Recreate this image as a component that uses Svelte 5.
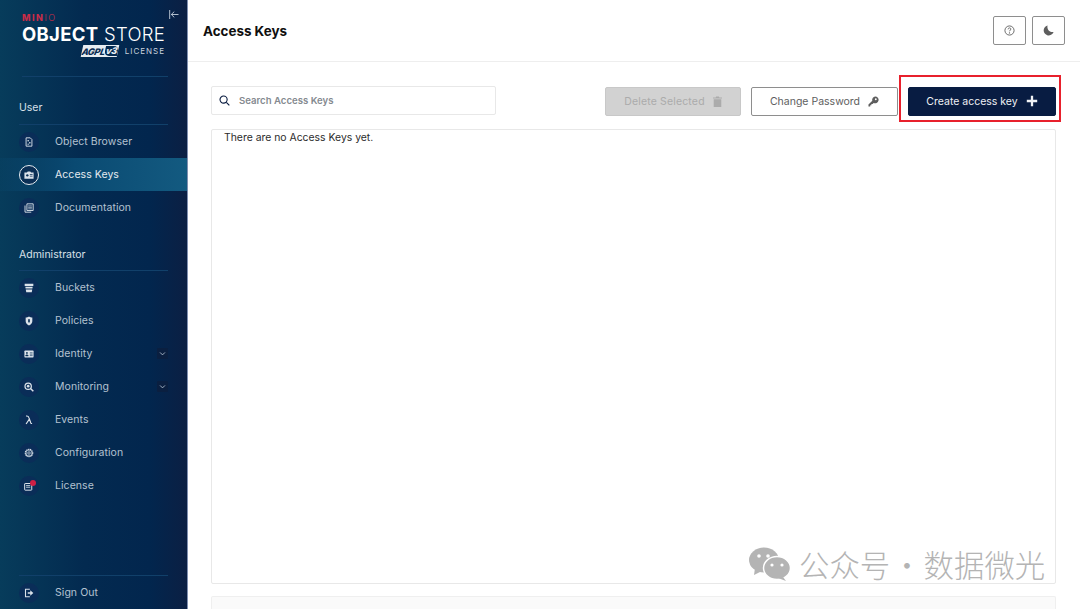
<script>
  const userItems = [
    { label: 'Object Browser', icon: 'browser' },
    { label: 'Access Keys', icon: 'keys', active: true },
    { label: 'Documentation', icon: 'docs' }
  ];
  const adminItems = [
    { label: 'Buckets', icon: 'buckets' },
    { label: 'Policies', icon: 'policies' },
    { label: 'Identity', icon: 'identity', expand: true },
    { label: 'Monitoring', icon: 'monitoring', expand: true },
    { label: 'Events', icon: 'events' },
    { label: 'Configuration', icon: 'config' },
    { label: 'License', icon: 'license', dot: true }
  ];
</script>

{#snippet icon(name)}
  <svg viewBox="0 0 12 12" aria-hidden="true">
    {#if name === 'browser'}
      <path d="M2.500 1h5L9.500 3v8h-7z" fill="none" stroke="currentColor" stroke-width="1.100" />
      <circle cx="5" cy="4.500" r="1" fill="currentColor" />
      <circle cx="7" cy="7" r="1" fill="currentColor" />
      <circle cx="5" cy="8.600" r=".8" fill="currentColor" />
    {:else if name === 'keys'}
      <path d="M.5 3h3l1-1.200h3l1 1.200h3v7.500H.5z" fill="currentColor" />
      <circle cx="4" cy="6.400" r="1.400" fill="#0b2f55" />
      <path d="M7 5.400h3.300M7 7.400h3.300" stroke="#0b2f55" stroke-width=".9" />
    {:else if name === 'docs'}
      <path d="M3.500 1H11v8H3.500z" fill="none" stroke="currentColor" stroke-width="1.100" />
      <path d="M1.200 3v8h7.500" fill="none" stroke="currentColor" stroke-width="1.100" />
      <path d="M5 3.500h4.500M5 5.200h4.500M5 7h4.500" stroke="currentColor" stroke-width=".8" />
    {:else if name === 'buckets'}
      <path d="M.8 1h10.400v2.500H.8zM1.600 4.600h8.800l-.3 2.100H1.900zM2.100 7.800h7.800L9.300 11.200H2.700z" fill="currentColor" />
    {:else if name === 'policies'}
      <path d="M6 .6c1.400 1 2.700 1.300 4 1.300v4.500c0 2.300-1.800 3.900-4 5-2.200-1.100-4-2.700-4-5V1.900C3.300 1.900 4.600 1.600 6 .6z" fill="currentColor" />
      <rect x="5" y="3.500" width="2" height="4.500" rx="1" fill="#0b2f55" />
    {:else if name === 'identity'}
      <rect x=".5" y="1.800" width="11" height="8.400" rx=".8" fill="currentColor" />
      <circle cx="3.500" cy="4.700" r="1.100" fill="#0b2f55" />
      <path d="M1.900 8.300c.2-1.700 3-1.700 3.200 0zM7 4.500h3.300M7 6.200h3.300M7 7.900h3.300" fill="#0b2f55" stroke="#0b2f55" stroke-width=".7" />
    {:else if name === 'monitoring'}
      <circle cx="5" cy="5" r="3.800" fill="none" stroke="currentColor" stroke-width="1.500" />
      <path d="M7.800 7.800l3.400 3.400" stroke="currentColor" stroke-width="1.800" />
      <circle cx="5" cy="5" r="1.600" fill="currentColor" />
    {:else if name === 'events'}
      <path d="M2.500 1.300c2.300-.4 3 .6 3.500 2.200l2.200 6c.2.500.6.800 1.500.7M6.400 5L2.500 10.800" fill="none" stroke="currentColor" stroke-width="1.400" />
    {:else if name === 'config'}
      <circle cx="6" cy="6" r="4.500" fill="none" stroke="currentColor" stroke-width="1.300" stroke-dasharray="1.800 .6" />
      <circle cx="6" cy="6" r="3.500" fill="none" stroke="currentColor" stroke-width=".8" />
      <circle cx="6" cy="6" r="1.500" fill="#0a2d58" stroke="currentColor" stroke-width=".9" />
    {:else if name === 'license'}
      <rect x=".8" y="3" width="8.500" height="8" rx=".6" fill="none" stroke="currentColor" stroke-width="1.200" />
      <path d="M2.500 5.500h5M2.500 7.500h5" stroke="currentColor" stroke-width="1" />
    {:else if name === 'signout'}
      <path d="M7 1.500H1.800v9H7" fill="none" stroke="currentColor" stroke-width="1.300" />
      <path d="M4.500 5h3V2.800L11.200 6 7.500 9.200V7h-3z" fill="currentColor" />
    {/if}
  </svg>
{/snippet}

{#snippet navRow(item)}
  <div class="nav-row" class:active={item.active}>
    <span class="nav-icon">
      {@render icon(item.icon)}
      {#if item.dot}<span class="dot"></span>{/if}
    </span>
    <span class="nav-label">{item.label}</span>
    {#if item.expand}
      <span class="expand">
        <svg viewBox="0 0 8 8" width="7" height="7"><path d="M1.200 2.800L4 5.600l2.800-2.800" fill="none" stroke="currentColor" stroke-width="1" /></svg>
      </span>
    {/if}
  </div>
{/snippet}

<div class="page">
  <aside class="sidebar">
    <div class="brand">
      <button class="collapse" aria-label="Collapse menu">
        <svg viewBox="0 0 11 10" width="10" height="9"><path d="M.7 0v10M10.500 5H2.500M5.800 1.800L2.500 5l3.300 3.200" fill="none" stroke="currentColor" stroke-width="1" /></svg>
      </button>
      <div class="logo-min"><b>MIN</b>IO</div>
      <div class="logo-main"><b>OBJECT</b> STORE</div>
      <div class="logo-sub">
        <span class="agpl"><span>AGPL</span><i>v3</i></span>
        <span class="logo-license">LICENSE</span>
      </div>
    </div>

    <div class="group-title first">User</div>
    <nav class="nav-list">
      {#each userItems as item}
        {@render navRow(item)}
      {/each}
    </nav>

    <div class="group-title second">Administrator</div>
    <nav class="nav-list">
      {#each adminItems as item}
        {@render navRow(item)}
      {/each}
    </nav>

    <div class="signout">
      {@render navRow({ label: 'Sign Out', icon: 'signout' })}
    </div>
  </aside>

  <main class="main">
    <header class="topbar">
      <h1>Access Keys</h1>
      <div class="top-actions">
        <button class="square" aria-label="Help">
          <svg viewBox="0 0 12 12" width="11" height="11">
            <circle cx="6" cy="6" r="5" fill="none" stroke="currentColor" stroke-width="1" />
            <path d="M4.500 4.700c0-2 3-2 3-.2 0 1.100-1.500 1.100-1.500 2.400" fill="none" stroke="currentColor" stroke-width="1" />
            <circle cx="6" cy="8.700" r=".7" fill="currentColor" />
          </svg>
        </button>
        <button class="square" aria-label="Dark mode">
          <svg viewBox="0 0 12 12" width="11" height="11">
            <path d="M5 .5a5.500 5.500 0 1 0 6.500 7C8 8.500 3.800 5 5 .5z" fill="currentColor" />
          </svg>
        </button>
      </div>
    </header>

    <div class="content">
      <div class="toolbar">
        <label class="search">
          <svg viewBox="0 0 12 12" width="11" height="11">
            <circle cx="5" cy="5" r="3.900" fill="none" stroke="#07193e" stroke-width="1.200" />
            <path d="M8 8l3.300 3.300" stroke="#07193e" stroke-width="1.300" />
          </svg>
          <span>Search Access Keys</span>
        </label>
        <div class="actions">
          <button class="btn disabled">
            Delete Selected
            <svg viewBox="0 0 10 12" width="9" height="11"><path d="M0 1.500h3l.5-1h3l.5 1h3v1.200H0zM.8 3.500h8.400V12H.8z" fill="currentColor" /></svg>
          </button>
          <button class="btn outline">
            Change Password
            <svg viewBox="0 0 12 12" width="11" height="11"><path d="M7.800.5a3.700 3.700 0 1 1-1.600 7L5 8.700H3.700V10H2.400v1.500H.5V9.300l4.200-4.100A3.700 3.700 0 0 1 7.800.5z" fill="currentColor" /><circle cx="8.500" cy="3.500" r="1" fill="#fff" /></svg>
          </button>
          <span class="highlight">
            <button class="btn primary">
              Create access key
              <svg viewBox="0 0 12 12" width="12" height="12"><path d="M6 .8v10.400M.8 6h10.400" stroke="currentColor" stroke-width="2.300" /></svg>
            </button>
          </span>
        </div>
      </div>

      <section class="panel">There are no Access Keys yet.</section>
      <div class="panel-next"></div>
    </div>

    <div class="watermark">
      <svg viewBox="0 0 42 34" width="42" height="34">
        <ellipse cx="15" cy="13" rx="15" ry="12.500" fill="#b4b4b4" />
        <path d="M6 21l-1 7 8-4z" fill="#b4b4b4" />
        <ellipse cx="28" cy="21" rx="13.500" ry="11.500" fill="#b4b4b4" stroke="#fff" stroke-width="1.500" />
        <path d="M34 30l3 4-8-3z" fill="#b4b4b4" />
        <circle cx="10" cy="9" r="1.800" fill="#fff" /><circle cx="19" cy="9" r="1.800" fill="#fff" />
        <circle cx="23" cy="18" r="1.600" fill="#fff" /><circle cx="33" cy="18" r="1.600" fill="#fff" />
      </svg>
      <span>公众号<span class="wm-dot">·</span>数据微光</span>
    </div>
  </main>
</div>

<style>
  :global(body) {
    margin: 0;
    background: #fff;
    font-family: Inter, "Liberation Sans", sans-serif;
  }

  .page {
    display: flex;
    width: 1080px;
    height: 609px;
    overflow: hidden;
  }

  /* sidebar */
  .sidebar {
    width: 187px;
    flex-shrink: 0;
    display: flex;
    flex-direction: column;
    color: #fff;
    background: linear-gradient(90deg, #073c5b 0%, #032a50 45%, #02264e 80%, #0b1f43 100%);
    border-right: 1px solid #7f8fb0;
  }

  .brand {
    position: relative;
    height: 77px;
    box-sizing: border-box;
    margin: 0 19px 0 22px;
    padding-top: 13px;
    border-bottom: 1px solid #11406a;
  }
  .collapse {
    position: absolute;
    top: 10px;
    right: -11px;
    padding: 0;
    background: none;
    border: 0;
    color: #c5d0dc;
    display: flex;
  }
  .logo-min {
    font-size: 9px;
    line-height: 10px;
    letter-spacing: 1.500px;
    color: #c72c48;
    font-weight: 300;
  }
  .logo-min b { font-weight: 800; }
  .logo-main {
    font-size: 18.500px;
    line-height: 22px;
    font-weight: 300;
    white-space: nowrap;
    letter-spacing: 0.3px;
  }
  .logo-main b { font-weight: 700; }
  .logo-sub {
    display: flex;
    align-items: center;
    justify-content: flex-end;
    gap: 7px;
    padding-right: 3px;
  }
  .agpl {
    display: flex;
    width: 36px;
    height: 12px;
    box-sizing: border-box;
    align-items: center;
    font-size: 9px;
    font-weight: 800;
    font-style: italic;
    color: #062a50;
    background: #e8edf2;
    transform: skewX(-12deg);
    letter-spacing: -0.3px;
    overflow: hidden;
  }
  .agpl span { flex: 1; text-align: center; }
  .agpl i {
    color: #e8edf2;
    background: #062a50;
    border-radius: 0 5px 0 5px;
    padding: 0 1px;
    line-height: 10px;
    margin-right: 1px;
  }
  .logo-license {
    font-size: 8px;
    letter-spacing: 1px;
    color: #c9d3de;
  }

  .group-title {
    font-size: 10.500px;
    line-height: 14px;
    color: #d9e0e8;
    margin: 0 19px;
    border-bottom: 1px solid #11406a;
  }
  .group-title.first { margin-top: 24px; padding-bottom: 9px; }
  .group-title.second { margin-top: 24px; padding-bottom: 8px; }

  .nav-row {
    display: flex;
    align-items: center;
    height: 33px;
    padding: 0 19px;
    color: #b4c2d1;
    font-size: 10.500px;
    letter-spacing: 0.05px;
  }
  .nav-row.active {
    color: #e6ebf0;
    background: linear-gradient(90deg, rgba(8, 70, 106, 0.3) 0%, #0a4a72 40%, #135a80 100%);
  }
  .nav-icon {
    position: relative;
    width: 20px;
    height: 20px;
    box-sizing: border-box;
    border-radius: 50%;
    background: #0a2d58;
    color: #dbe2ea;
    display: flex;
    align-items: center;
    justify-content: center;
    margin-right: 16px;
    flex-shrink: 0;
  }
  .nav-row.active .nav-icon {
    background: #0b2f55;
    border: 1px solid #e6ebf0;
  }
  .nav-icon svg { width: 10px; height: 10px; }
  .dot {
    position: absolute;
    top: 4px;
    left: 11px;
    width: 6px;
    height: 6px;
    border-radius: 50%;
    background: #cf1f45;
  }
  .nav-label { flex: 1; white-space: nowrap; }
  .expand {
    width: 11px;
    height: 11px;
    display: flex;
    align-items: center;
    justify-content: center;
    background: #0a1f40;
    color: #b4c2d1;
    border-radius: 1px;
  }
  .signout {
    margin: auto 19px 0;
    height: 33px;
    border-top: 1px solid #11406a;
  }
  .signout :global(.nav-row) {
    padding: 0;
  }

  /* main */
  .main {
    position: relative;
    flex: 1;
    min-width: 0;
    display: flex;
    flex-direction: column;
  }
  .topbar {
    height: 61px;
    flex-shrink: 0;
    display: flex;
    align-items: center;
    justify-content: space-between;
    padding: 0 15px;
    border-bottom: 1px solid #eeeeee;
  }
  h1 {
    margin: 0;
    font-size: 13.400px;
    font-weight: 700;
    color: #0f0f0f;
  }
  .top-actions { display: flex; gap: 6px; }
  .square {
    width: 33px;
    height: 29px;
    display: flex;
    align-items: center;
    justify-content: center;
    background: #fff;
    border: 1px solid #8e8e8e;
    border-radius: 2px;
    color: #5e5e5e;
    padding: 0;
  }

  .content {
    flex: 1;
    min-height: 0;
    padding: 23px 24px 0 23px;
    display: flex;
    flex-direction: column;
  }
  .toolbar {
    display: flex;
    align-items: center;
    justify-content: space-between;
    height: 32px;
    margin-bottom: 12px;
  }
  .search {
    width: 285px;
    height: 29px;
    box-sizing: border-box;
    display: flex;
    align-items: center;
    gap: 9px;
    padding-left: 7px;
    border: 1px solid #e8e8e8;
    border-radius: 2px;
    font-size: 9.600px;
    font-weight: 600;
    color: #858a90;
    margin-top: -2px;
  }
  .actions { display: flex; gap: 10px; align-items: center; }
  .btn {
    height: 29px;
    box-sizing: border-box;
    display: flex;
    align-items: center;
    justify-content: center;
    gap: 8px;
    border-radius: 2px;
    font-family: inherit;
    font-size: 10.500px;
    padding: 0;
  }
  .disabled {
    width: 136px;
    background: #d2d2d2;
    border: 1px solid #c8c8c8;
    color: #ababab;
    letter-spacing: 0.15px;
  }
  .outline {
    width: 147px;
    background: #fff;
    border: 1px solid #8e8e8e;
    color: #5e5e5e;
  }
  .primary {
    width: 148px;
    background: #081c42;
    border: 1px solid #081c42;
    color: #f0f2f5;
  }
  .highlight {
    display: block;
    position: relative;
  }
  .highlight::after {
    content: "";
    position: absolute;
    left: -9px;
    right: -5px;
    top: -12px;
    bottom: -6px;
    border: 2px solid #e8202c;
    pointer-events: none;
  }

  .panel {
    height: 455px;
    flex-shrink: 0;
    box-sizing: border-box;
    border: 1px solid #e8e8e8;
    border-radius: 2px;
    padding: 2px 12px;
    font-size: 10.400px;
    line-height: 12px;
    color: #2c2c2c;
  }
  .panel-next {
    flex: 1;
    margin-top: 12px;
    background: #fafafa;
    border: 1px solid #efefef;
    border-bottom: 0;
    border-radius: 2px 2px 0 0;
  }

  .watermark {
    position: absolute;
    left: 561px;
    top: 547px;
    display: flex;
    align-items: center;
    gap: 8px;
    color: #b4b4b4;
    font-family: "Noto Sans CJK SC", sans-serif;
    font-size: 30.400px;
    font-weight: 300;
    line-height: 34px;
    white-space: nowrap;
  }
  .wm-dot { margin: 0 1.500px; }
</style>
